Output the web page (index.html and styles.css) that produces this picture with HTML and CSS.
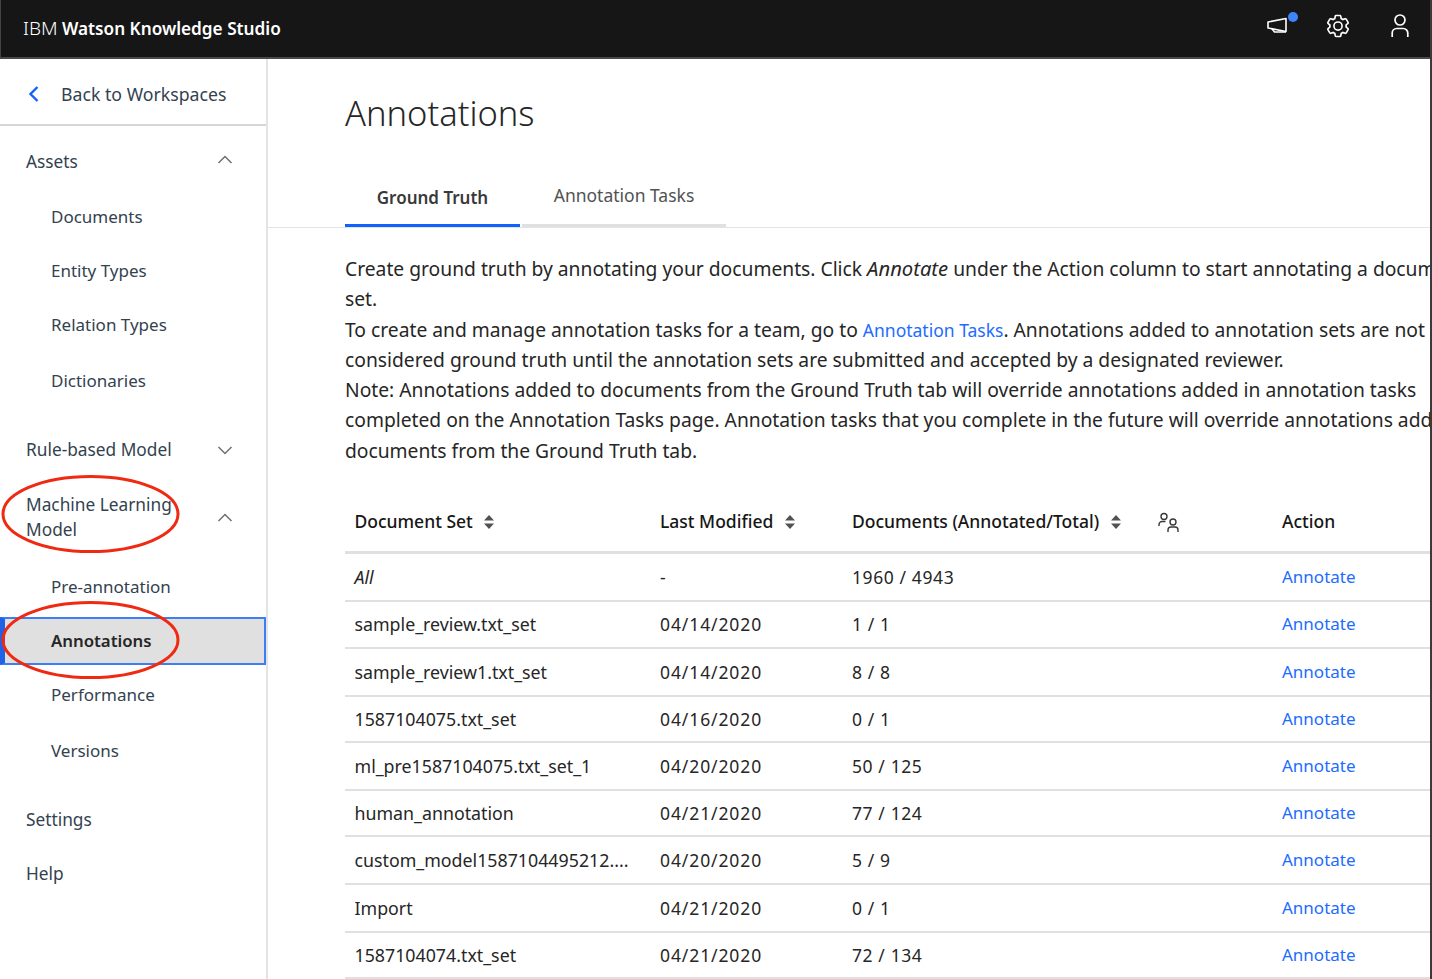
FILE: index.html
```html
<!DOCTYPE html>
<html lang="en">
<head>
    <meta charset="UTF-8">
    <title>Annotations - IBM Watson Knowledge Studio</title>
    <link rel="stylesheet" href="styles.css">
</head>
<body>
<header class="topbar">
    <div class="brand"><span class="brand-ibm">IBM</span> <strong>Watson Knowledge Studio</strong></div>
    <div class="topbar-icons">
        <span class="top-icon news">
            <svg width="22" height="30" viewBox="0 0 22 30" fill="none" stroke="#fff" stroke-width="1.6" stroke-linejoin="round">
                <path d="M2 11 L20 7.5 V20.5 L2 17 Z"/>
                <path d="M6 17.8 L8.5 21 H20"/>
            </svg>
            <i class="news-dot"></i>
        </span>
        <span class="top-icon">
            <svg width="26" height="26" viewBox="0 0 32 32" fill="#fff">
                <path d="M27,16.76c0-.25,0-.5,0-.76s0-.51,0-.77l1.92-1.68A2,2,0,0,0,29.3,11L26.94,7a2,2,0,0,0-1.73-1,2,2,0,0,0-.64.1l-2.43.82a11.35,11.35,0,0,0-1.31-.75l-.51-2.52a2,2,0,0,0-2-1.61H13.64a2,2,0,0,0-2,1.61l-.51,2.52a11.48,11.48,0,0,0-1.32.75L7.43,6.06A2,2,0,0,0,6.79,6,2,2,0,0,0,5.06,7L2.7,11a2,2,0,0,0,.41,2.51L5,15.24c0,.25,0,.5,0,.76s0,.51,0,.77L3.11,18.45A2,2,0,0,0,2.7,21L5.06,25a2,2,0,0,0,1.73,1,2,2,0,0,0,.64-.1l2.43-.82a11.35,11.35,0,0,0,1.31.75l.51,2.52a2,2,0,0,0,2,1.61h4.72a2,2,0,0,0,2-1.61l.51-2.52a11.48,11.48,0,0,0,1.32-.75l2.42.82a2,2,0,0,0,.64.1,2,2,0,0,0,1.73-1L29.3,21a2,2,0,0,0-.41-2.51ZM25.21,24l-3.43-1.16a8.86,8.86,0,0,1-2.71,1.57L18.36,28H13.64l-.71-3.55a9.36,9.36,0,0,1-2.7-1.57L6.79,24,4.43,20l2.72-2.4a8.9,8.9,0,0,1,0-3.13L4.43,12,6.79,8l3.43,1.16a8.86,8.86,0,0,1,2.71-1.57L13.64,4h4.72l.71,3.55a9.36,9.36,0,0,1,2.7,1.57L25.21,8,27.57,12l-2.72,2.4a8.9,8.9,0,0,1,0,3.13L27.57,20Z"/>
                <path d="M16,22a6,6,0,1,1,6-6A5.94,5.94,0,0,1,16,22Zm0-10a3.91,3.91,0,0,0-4,4,3.91,3.91,0,0,0,4,4,3.91,3.91,0,0,0,4-4A3.91,3.91,0,0,0,16,12Z"/>
            </svg>
        </span>
        <span class="top-icon">
            <svg width="24" height="26" viewBox="0 0 24 26" fill="none" stroke="#fff" stroke-width="1.7">
                <circle cx="12" cy="7" r="5"/>
                <path d="M4.2 24 V20 A4.5 4.5 0 0 1 8.7 15.5 H15.3 A4.5 4.5 0 0 1 19.8 20 V24"/>
            </svg>
        </span>
    </div>
</header>

<div class="layout">
    <aside class="sidebar">
        <a class="back-link">
            <svg width="14" height="18" viewBox="0 0 14 18" fill="none" stroke="#0f62fe" stroke-width="2.4"><path d="M10.5 2 L3.5 9 L10.5 16"/></svg>
            <span>Back to Workspaces</span>
        </a>

        <div class="nav-head first">Assets
            <svg class="chev" width="16" height="10" viewBox="0 0 16 10" fill="none" stroke="#6f6f6f" stroke-width="1.5"><path d="M1.5 8 L8 1.5 L14.5 8"/></svg>
        </div>
        <div class="nav-sub docs">Documents</div>
        <div class="nav-sub">Entity Types</div>
        <div class="nav-sub">Relation Types</div>
        <div class="nav-sub gap-top">Dictionaries</div>

        <div class="nav-head rule">Rule-based Model
            <svg class="chev" width="16" height="10" viewBox="0 0 16 10" fill="none" stroke="#6f6f6f" stroke-width="1.5"><path d="M1.5 2 L8 8.5 L14.5 2"/></svg>
        </div>
        <div class="nav-head ml"><span>Machine Learning<br>Model</span>
            <svg class="chev" width="16" height="10" viewBox="0 0 16 10" fill="none" stroke="#6f6f6f" stroke-width="1.5"><path d="M1.5 8 L8 1.5 L14.5 8"/></svg>
        </div>
        <div class="nav-sub pre">Pre-annotation</div>
        <div class="nav-sub active">Annotations</div>
        <div class="nav-sub perf">Performance</div>
        <div class="nav-sub gap-top">Versions</div>
        <div class="nav-head settings">Settings</div>
        <div class="nav-head">Help</div>

        <!-- red marks drawn over the screenshot -->
        <svg class="marks" width="190" height="215" viewBox="0 0 190 215" fill="none" stroke="#f02a12" stroke-width="3">
            <ellipse cx="90.5" cy="40" rx="87.5" ry="37.5"/>
            <ellipse cx="90.5" cy="166" rx="87.5" ry="37.5"/>
        </svg>
    </aside>

    <main class="content">
        <h1>Annotations</h1>
        <div class="tabs">
            <div class="tab selected">Ground Truth</div>
            <div class="tab">Annotation Tasks</div>
        </div>
        <p class="intro">Create ground truth by annotating your documents. Click <em>Annotate</em> under the Action column to start annotating a document<br>set.<br>To create and manage annotation tasks for a team, go to <a class="link">Annotation Tasks</a>. Annotations added to annotation sets are not<br>considered ground truth until the annotation sets are submitted and accepted by a designated reviewer.<br>Note: Annotations added to documents from the Ground Truth tab will override annotations added in annotation tasks<br>completed on the Annotation Tasks page. Annotation tasks that you complete in the future will override annotations added to<br>documents from the Ground Truth tab.</p>

        <table class="sets">
            <thead>
            <tr>
                <th class="col-name">Document Set <svg class="sort" width="12" height="18" viewBox="0 0 12 18" fill="#525252"><path d="M6 2 L11 7.5 H1 Z M6 16 L1 10.5 H11 Z"/></svg></th>
                <th class="col-date">Last Modified <svg class="sort" width="12" height="18" viewBox="0 0 12 18" fill="#525252"><path d="M6 2 L11 7.5 H1 Z M6 16 L1 10.5 H11 Z"/></svg></th>
                <th class="col-docs">Documents (Annotated/Total) <svg class="sort" width="12" height="18" viewBox="0 0 12 18" fill="#525252"><path d="M6 2 L11 7.5 H1 Z M6 16 L1 10.5 H11 Z"/></svg></th>
                <th class="col-users">
                    <svg width="24" height="22" viewBox="0 0 24 22" fill="none" stroke="#393939" stroke-width="1.4">
                        <circle cx="7" cy="5.5" r="3"/>
                        <path d="M2 15 V13.5 A3 3 0 0 1 5 10.5 H8.5"/>
                        <circle cx="16" cy="11" r="3"/>
                        <path d="M11 21 V19 A3 3 0 0 1 14 16 H18 A3 3 0 0 1 21 19 V21"/>
                    </svg>
                </th>
                <th class="col-action">Action</th>
            </tr>
            </thead>
            <tbody>
            <tr class="row-48"><td><em>All</em></td><td>-</td><td>1960 / 4943</td><td></td><td><a class="link">Annotate</a></td></tr>
            <tr class="row-47"><td>sample_review.txt_set</td><td>04/14/2020</td><td>1 / 1</td><td></td><td><a class="link">Annotate</a></td></tr>
            <tr class="row-48"><td>sample_review1.txt_set</td><td>04/14/2020</td><td>8 / 8</td><td></td><td><a class="link">Annotate</a></td></tr>
            <tr class="row-46"><td>1587104075.txt_set</td><td>04/16/2020</td><td>0 / 1</td><td></td><td><a class="link">Annotate</a></td></tr>
            <tr class="row-48"><td>ml_pre1587104075.txt_set_1</td><td>04/20/2020</td><td>50 / 125</td><td></td><td><a class="link">Annotate</a></td></tr>
            <tr class="row-46"><td>human_annotation</td><td>04/21/2020</td><td>77 / 124</td><td></td><td><a class="link">Annotate</a></td></tr>
            <tr class="row-48"><td>custom_model1587104495212....</td><td>04/20/2020</td><td>5 / 9</td><td></td><td><a class="link">Annotate</a></td></tr>
            <tr class="row-48"><td>Import</td><td>04/21/2020</td><td>0 / 1</td><td></td><td><a class="link">Annotate</a></td></tr>
            <tr class="row-46"><td>1587104074.txt_set</td><td>04/21/2020</td><td>72 / 134</td><td></td><td><a class="link">Annotate</a></td></tr>
            </tbody>
        </table>
    </main>
</div>
</body>
</html>
```

FILE: styles.css
```css
* {
    box-sizing: border-box;
}

html, body {
    height: 100%;
}

body {
    margin: 0;
    height: 979px;
    overflow: hidden;
    font-family: "Noto Sans", "Liberation Sans", sans-serif;
    color: #262626;
    background-color: #fff;
    border-right: 2px solid #3a3a3a;
}

.topbar {
    height: 59px;
    background-color: #161616;
    border-bottom: 2px solid #4a4a4a;
    border-left: 1px solid #444;
    color: #fff;
    display: flex;
    align-items: center;
    justify-content: space-between;
    padding: 0 18px 2px 22px;
}

.brand {
    font-size: 17.2px;
    white-space: nowrap;
}

.brand-ibm {
    font-size: 19px;
    font-weight: 300;
}

.brand strong {
    font-weight: 600;
}

.topbar-icons {
    display: flex;
    align-items: center;
    gap: 37px;
    margin-top: -4px;
}

.top-icon {
    position: relative;
    display: flex;
}

.news-dot {
    position: absolute;
    top: 1.5px;
    right: -10px;
    width: 10px;
    height: 10px;
    border-radius: 50%;
    background-color: #3d85fb;
}

.layout {
    display: flex;
    height: 920px;
}

/* sidebar */
.sidebar {
    position: relative;
    flex: 0 0 268px;
    border-right: 2px solid #e4e4e4;
    font-size: 17.3px;
    color: #33424f;
}

.back-link {
    display: flex;
    align-items: center;
    gap: 20px;
    height: 67px;
    padding: 4px 0 0 27px;
    border-bottom: 2px solid #d6d6d6;
    font-size: 17.7px;
}

.nav-head {
    display: flex;
    align-items: center;
    justify-content: space-between;
    height: 54px;
    padding: 2px 33px 0 26px;
    line-height: 25.5px;
}

.nav-head.first {
    margin-top: 8px;
}

.nav-head.first .chev {
    margin-bottom: 4px;
}

.nav-head.rule {
    margin-top: 15px;
}

.nav-head.ml {
    margin-top: 13px;
}

.nav-head.ml .chev {
    margin-top: 2px;
}

.nav-head.settings {
    margin-top: 15px;
}

.nav-sub {
    display: flex;
    align-items: center;
    height: 54px;
    padding-left: 51px;
    font-size: 17px;
}

.nav-sub.docs {
    margin-top: 1px;
}

.nav-sub.gap-top {
    margin-top: 2px;
}

.nav-sub.pre {
    margin-top: 16px;
}

.nav-sub.active {
    height: 48px;
    margin-top: 4px;
    background-color: #e0e0e0;
    border: 2px solid #3d7ef6;
    border-left: 5px solid #1f62e8;
    padding: 0 0 2px 46px;
    font-size: 16.8px;
    font-weight: 600;
    color: #262626;
}

.nav-sub.perf {
    margin-top: 2px;
}

.marks {
    position: absolute;
    top: 415px;
    left: 0;
}

/* main */
.content {
    flex: 1;
    min-width: 0;
    overflow: hidden;
}

h1 {
    margin: 0 0 0 77px;
    padding-top: 31px;
    font-size: 34.5px;
    line-height: 46px;
    font-weight: 300;
    color: #262626;
}

.tabs {
    display: flex;
    margin-top: 37px;
    padding-left: 77px;
    height: 55px;
    border-bottom: 1px solid #e4e4e4;
}

.tab {
    width: 204px;
    margin-left: 2px;
    padding-top: 10px;
    text-align: center;
    font-size: 17.5px;
    color: #525252;
    border-bottom: 3px solid #e0e0e0;
}

.tab.selected {
    width: 175px;
    margin-left: 0;
    padding-top: 13px;
    font-size: 17px;
    font-weight: 600;
    color: #393939;
    border-bottom-color: #0f62fe;
}

.intro {
    margin: 26px 0 0 77px;
    font-size: 19.25px;
    line-height: 30.25px;
    white-space: nowrap;
    color: #262626;
}

.intro em {
    font-size: 20.2px;
    line-height: 0;
}

.link {
    color: #1d6cff;
    font-size: 17.5px;
}

.sets {
    margin: 31px 0 0 77px;
    width: 1090px;
    border-collapse: collapse;
    table-layout: fixed;
    font-size: 17.8px;
    white-space: nowrap;
}

.sets th {
    height: 56px;
    padding: 0 0 6px 9.5px;
    text-align: left;
    font-size: 17.5px;
    font-weight: 500;
    color: #161616;
    border-bottom: 3px solid #e0e0e0;
}

.sets td {
    padding: 0 0 0 9.5px;
    border-bottom: 2px solid #e0e0e0;
    color: #262626;
}

.sets td:nth-child(2) {
    font-size: 17.5px;
    letter-spacing: 0.9px;
}

.sets td:nth-child(3) {
    font-size: 17.5px;
    letter-spacing: 0.6px;
}

.sets .link {
    font-size: 17px;
    vertical-align: 1px;
}

.col-name { width: 305.5px; }
.col-date { width: 192px; }
.col-docs { width: 306px; }
.col-users { width: 124px; }

.sort {
    vertical-align: -3px;
    margin-left: 6px;
}

.col-users svg {
    display: block;
    margin: 2px 0 0 -1px;
}

.row-46 { height: 46px; }
.row-47 { height: 47px; }
.row-48 { height: 48px; }
```
